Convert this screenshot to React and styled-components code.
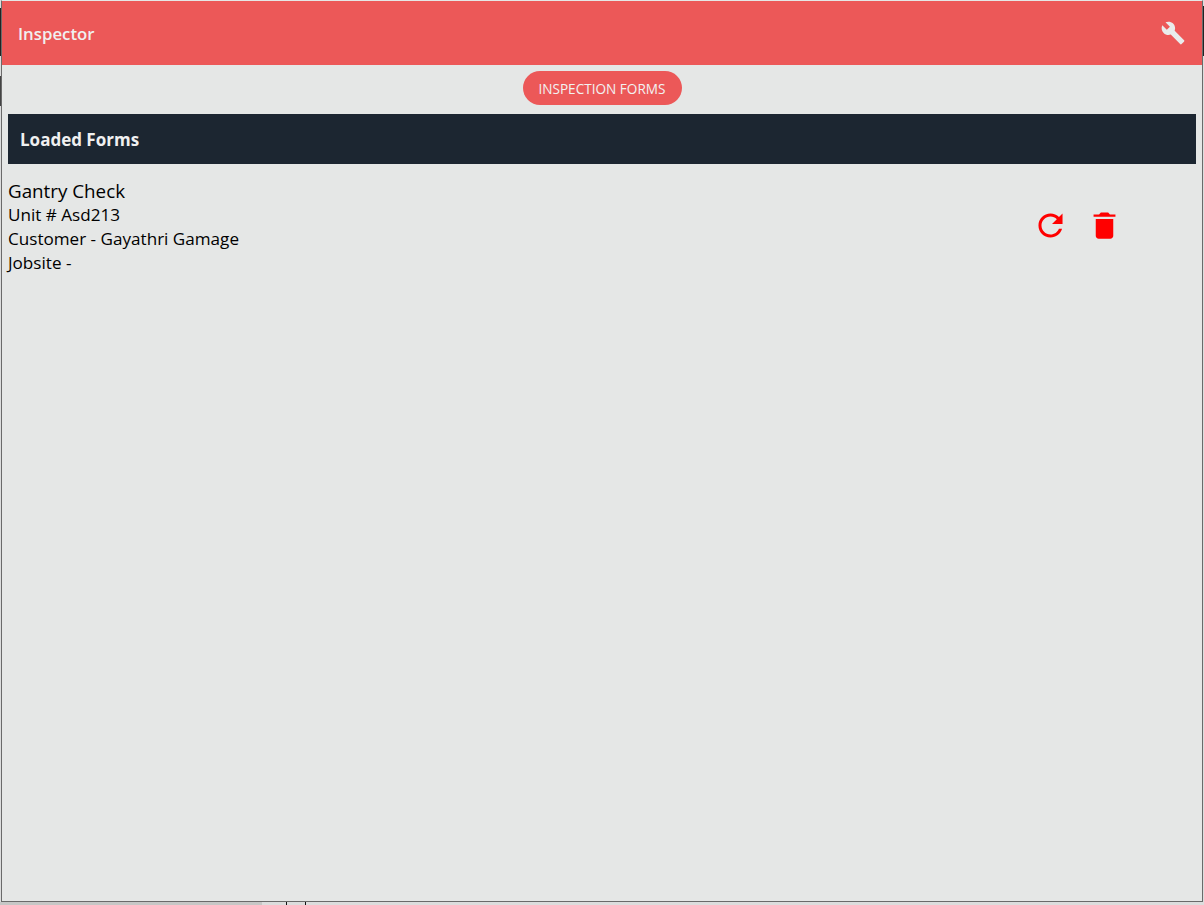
import React from "react";
import styled, { createGlobalStyle } from "styled-components";
import { IoMdBuild, IoMdRefresh, IoMdTrash } from "react-icons/io";

const GlobalStyle = createGlobalStyle`
  html, body {
    margin: 0;
    padding: 0;
    background: #dcdddd;
  }
  body {
    font-family: "Open Sans", "Noto Sans", "Liberation Sans", sans-serif;
  }
`;

const App = () => {
  return (
    <>
      <GlobalStyle />
      <Desktop>
        <Window>
          <Header>
            <Title>Inspector</Title>
            <IconButton $color="#e9ecec" $size={26}>
              <IoMdBuild />
            </IconButton>
          </Header>
          <Content>
            <ButtonRow>
              <PillButton>INSPECTION FORMS</PillButton>
            </ButtonRow>
            <SectionBar>Loaded Forms</SectionBar>
            <FormRow>
              <FormInfo>
                <FormName>Gantry Check</FormName>
                <FormLine>Unit # Asd213</FormLine>
                <FormLine>Customer - Gayathri Gamage</FormLine>
                <FormLine>Jobsite -</FormLine>
              </FormInfo>
              <Actions>
                <IconButton $color="#ff0000" $size={35}>
                  <IoMdRefresh />
                </IconButton>
                <IconButton $color="#ff0000" $size={35}>
                  <IoMdTrash />
                </IconButton>
              </Actions>
            </FormRow>
          </Content>
        </Window>
      </Desktop>
    </>
  );
};

export default App;

// bits of the desktop showing round the window edge
const Desktop = styled.div`
  width: 1204px;
  height: 905px;
  padding: 0 1px 3px 1px;
  box-sizing: border-box;
  overflow: hidden;
  background:
    linear-gradient(#222, #222) 0 8px / 1px 48px no-repeat,
    linear-gradient(#444, #444) 0 76px / 1px 30px no-repeat,
    linear-gradient(#222, #222) 1203px 6px / 1px 50px no-repeat,
    linear-gradient(#111, #111) 286px 902px / 1px 3px no-repeat,
    linear-gradient(#111, #111) 305px 902px / 1px 3px no-repeat,
    linear-gradient(#c6c7c6, #c6c7c6) 0 902px / 262px 3px no-repeat,
    #dcdddd;
`;
const Window = styled.div`
  height: 902px;
  box-sizing: border-box;
  background: #e5e7e6;
  border: 1px solid #6a6a6a;
  border-top: 1px solid #e5e7e6;
`;
const Header = styled.div`
  height: 64px;
  background: #ec5858;
  display: flex;
  align-items: center;
  justify-content: space-between;
  padding: 0 16px;
`;
const Title = styled.h1`
  margin: 0;
  font-size: 16.8px;
  font-weight: 600;
  color: #f0f0f0;
`;
const IconButton = styled.span`
  display: flex;
  align-items: center;
  justify-content: center;
  color: ${(p) => p.$color};
  font-size: ${(p) => p.$size}px;
`;
const Content = styled.div`
  padding: 6px 6px 0;
`;
const ButtonRow = styled.div`
  display: flex;
  justify-content: center;
  margin-bottom: 9px;
`;
const PillButton = styled.button`
  width: 159px;
  height: 34px;
  padding: 0;
  border: none;
  border-radius: 17px;
  background: #ec5858;
  color: #f2f2f2;
  font-family: inherit;
  font-size: 13.6px;
`;
const SectionBar = styled.div`
  height: 50px;
  display: flex;
  align-items: center;
  padding-left: 12px;
  background: #1c2631;
  color: #f0f0f0;
  font-size: 17px;
  font-weight: 700;
`;
const FormRow = styled.div`
  display: flex;
  align-items: center;
  justify-content: space-between;
  padding: 15px 74px 0 0;
`;
const FormInfo = styled.div`
  color: #000;
`;
const FormName = styled.div`
  font-size: 18.8px;
  line-height: 24px;
`;
const FormLine = styled.div`
  font-size: 17.1px;
  line-height: 24px;
`;
const Actions = styled.div`
  display: flex;
  gap: 19px;
  margin-bottom: 3px;
`;
